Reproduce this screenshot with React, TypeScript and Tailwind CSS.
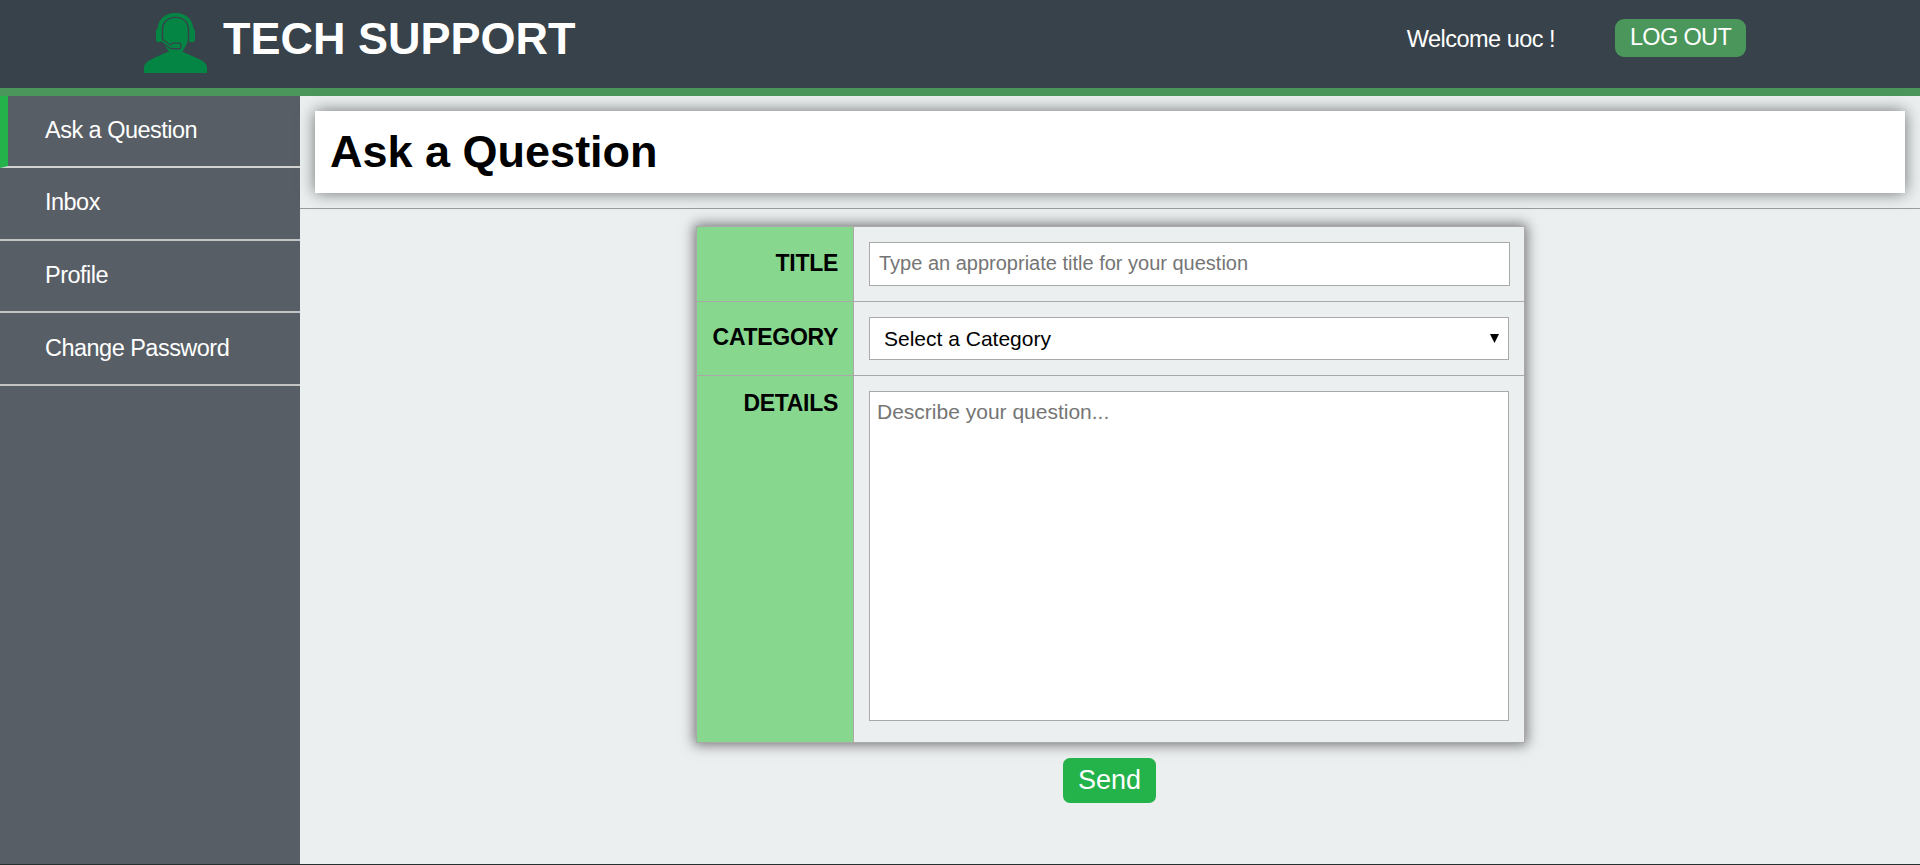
import React from "react";

const navItems = ["Ask a Question", "Inbox", "Profile", "Change Password"];

function AgentIcon() {
  return (
    <svg className="block h-[60px] w-[63px]" viewBox="0 0 63 60" fill="#048544">
      <path d="M13.500 18C13.500 6.500 20.500 0 31.500 0S49.500 6.500 49.500 18H45.500C45.500 9 40 3.700 31.500 3.700S17.500 9 17.500 18Z" />
      <path d="M12 18Q12 15.800 14 15.500H17.700V29H14Q12 28.800 12 27ZM51 18Q51 15.800 49 15.500H45.300V29H49Q51 28.800 51 27Z" />
      <path d="M31.500 4.900C39 4.900 43.800 9.500 43.800 17V26C43.800 30 41 35 38 39H25.500C22 35 19.200 30 19.200 26V17C19.200 9.500 24 4.900 31.500 4.900Z" />
      <path d="M17.500 27.500L26.500 33.800H35.500" fill="none" stroke="#37424a" strokeWidth="4" />
      <rect x="26.500" y="29.600" width="11" height="6.800" rx="2" fill="#37424a" />
      <path d="M16.500 26.800L26.700 33.800H34" fill="none" stroke="#048544" strokeWidth="1.800" />
      <rect x="27.600" y="30.800" width="8.700" height="4.300" rx="1" />
      <path d="M25.500 38.300H37.500C43 41 50 43.500 55.500 46.200C61 49 63 51.500 63 55V60H0V55C0 51.500 2.500 48.500 8 46C13 43.500 20 40.500 25.500 38.300Z" />
    </svg>
  );
}

const labelBase = "border-r border-[#a9a9a9] bg-[#87d78f] pr-[15px] text-right text-[23px] font-bold tracking-[-0.3px]";

export default function App() {
  return (
    <div className="flex h-[865px] flex-col overflow-hidden border-b border-[#25302f] bg-[#ebeff0] font-['Liberation_Sans',Arial,sans-serif] text-[23.5px] leading-[26px] tracking-[-0.52px] text-black">
      <header className="flex h-24 shrink-0 items-start border-b-8 border-[#4a965b] bg-[#37424a] text-white">
        <div className="flex items-start pt-[13px] pl-36">
          <AgentIcon />
          <h1 className="ml-4 text-[45px] leading-[52px] font-bold tracking-normal whitespace-nowrap">TECH SUPPORT</h1>
        </div>
        <div className="ml-auto flex items-start pr-[174px]">
          <span className="mt-[26px] mr-[60px]">Welcome uoc !</span>
          <button className="mt-[19px] h-[38px] w-[131px] rounded-[9px] bg-[#4a965b] pb-0.5 leading-[34px] tracking-[-0.65px] whitespace-nowrap">LOG OUT</button>
        </div>
      </header>
      <div className="flex min-h-0 flex-1">
        <nav className="w-[300px] shrink-0 bg-[#585e65] text-white">
          {navItems.map((item, i) => (
            <a
              key={item}
              className={
                i === 0
                  ? "flex h-[72px] items-center border-b-2 border-l-8 border-b-[#d3d3d3] border-l-[#24b24b] pb-0.5 pl-[37px]"
                  : "flex h-[72.7px] items-center border-b-2 border-[#c4c4c4] pb-0.5 pl-[45px]"
              }
            >
              {item}
            </a>
          ))}
        </nav>
        <main className="flex min-w-0 flex-1 flex-col">
          <div className="mx-[15px] mt-[15px] h-[82px] shrink-0 bg-white pt-[15px] pl-[15px] shadow-[0_0_15px_#707070]">
            <h2 className="text-[45px] leading-[52px] font-bold tracking-normal">Ask a Question</h2>
          </div>
          <hr className="mt-[15px] shrink-0 border-t border-[#9a9a9a]" />
          <form className="ml-[396px] mt-[17px] grid w-[829px] shrink-0 grid-cols-[157px_1fr] grid-rows-[75px_74px_366px] border border-[#a9a9a9] shadow-[0_0_12px_2px_#757575]">
            <label className={`${labelBase} border-b pt-[23px]`}>TITLE</label>
            <div className="border-b border-[#a9a9a9] pt-[15px] pl-[15px]">
              <input
                className="block h-11 w-[641px] border border-[#a9a9a9] bg-white px-[9px] pb-0.5 text-[20px] tracking-normal outline-none placeholder:text-[#757575]"
                placeholder="Type an appropriate title for your question"
              />
            </div>
            <label className={`${labelBase} border-b pt-[22px]`}>CATEGORY</label>
            <div className="border-b border-[#a9a9a9] pt-[15px] pl-[15px]">
              <div className="flex h-[43px] w-[640px] items-center justify-between border border-[#a9a9a9] bg-white pr-[9px] pl-[14px] text-[21px] tracking-normal">
                <span>Select a Category</span>
                <svg className="h-[9px] w-[9px]" viewBox="0 0 9 9">
                  <path d="M0 0H9L4.500 9Z" />
                </svg>
              </div>
            </div>
            <label className={`${labelBase} pt-[14px]`}>DETAILS</label>
            <div className="pt-[15px] pl-[15px]">
              <textarea
                className="block h-[330px] w-[640px] resize-none border border-[#a9a9a9] bg-white px-[7px] pt-[8px] text-[21px] leading-6 tracking-normal outline-none placeholder:text-[#757575]"
                placeholder="Describe your question..."
              />
            </div>
          </form>
          <button className="mt-[15px] ml-[763px] h-[45px] w-[93px] shrink-0 rounded-[7px] bg-[#24b24b] pb-0.5 text-[27px] leading-[40px] tracking-normal text-white">Send</button>
        </main>
      </div>
    </div>
  );
}
